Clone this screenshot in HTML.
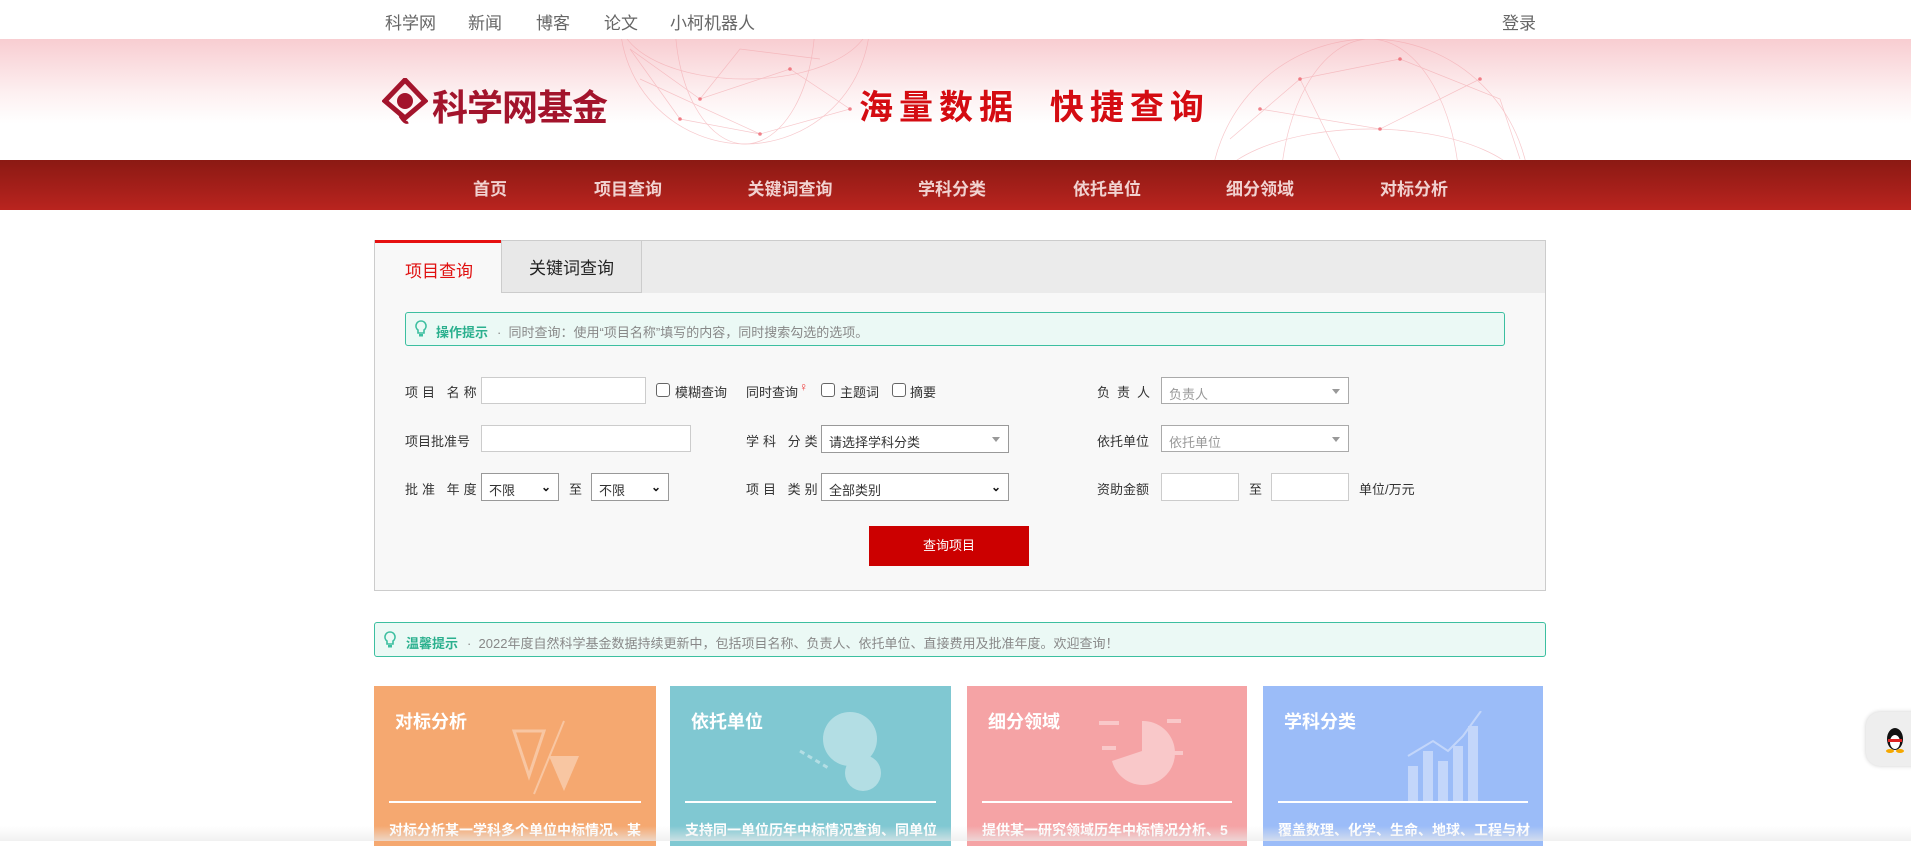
<!DOCTYPE html>
<html><head><meta charset="utf-8"><style>
*{margin:0;padding:0;box-sizing:border-box}
body{width:1911px;height:841px;overflow:hidden;background:#fff;font-family:"Liberation Sans","Noto Sans CJK SC",sans-serif;position:relative}
.a{position:absolute;white-space:nowrap}
.top a{position:absolute;top:9px;font-size:17px;color:#666;text-decoration:none}
.nav span{position:absolute;top:15px;font-size:17px;font-weight:bold;color:#f1d2d0;transform:translateX(-50%)}
.lbl{font-size:13px;color:#333}
.inp{position:absolute;background:#fff;border:1px solid #ccc}
.sel{position:absolute;background:#fff;border:1px solid #999;font-size:13px;color:#333;padding:6px 0 0 7px}
.sel.g{color:#999;border-color:#aaa}
.tri{position:absolute;right:8px;top:11px;border-left:4px solid transparent;border-right:4px solid transparent;border-top:5px solid #999}
.chev{position:absolute;right:7px;top:6px;font-size:12px;color:#111;font-weight:bold}
.cb{position:absolute;width:14px;height:14px;border:1px solid #666;border-radius:3px;background:#fff}
.card{position:absolute;top:686px;height:160px;color:#fff;overflow:hidden}
.card .t{position:absolute;left:21px;top:22px;font-size:18px;font-weight:bold}
.card .l{position:absolute;left:15px;right:15px;top:115px;height:2px;background:#fff}
.card .d{position:absolute;left:15px;right:10px;top:134px;font-size:14px;font-weight:bold;overflow:hidden;white-space:nowrap}
</style></head><body>
<div class="top">
<a style="left:385px">科学网</a><a style="left:468px">新闻</a><a style="left:536px">博客</a><a style="left:604px">论文</a><a style="left:670px">小柯机器人</a><a style="left:1502px">登录</a>
</div>
<div class="a" style="left:0;top:39px;width:1911px;height:121px;background:linear-gradient(#f8cdd1,#fdf0f1 45%,#fff 70%);overflow:hidden">
<svg width="1911" height="121" style="position:absolute;left:0;top:0">
<g fill="none" stroke="#f2a5ab" stroke-width="0.7" opacity="0.6">
<circle cx="745" cy="-20" r="125"/><ellipse cx="745" cy="-20" rx="70" ry="125"/><ellipse cx="745" cy="-20" rx="125" ry="60"/>
<path d="M630 10 L700 60 L790 30 L850 70 L760 95 L680 80 Z M640 40 L760 95 M700 60 L740 10 L820 20"/>
<circle cx="1370" cy="160" r="160"/><ellipse cx="1370" cy="160" rx="90" ry="160"/><ellipse cx="1370" cy="160" rx="160" ry="70"/>
<path d="M1230 100 L1300 40 L1400 20 L1500 60 L1520 120 M1260 70 L1380 90 L1480 40 M1300 40 L1340 121"/>
</g>
<g fill="#ee6670" opacity="0.8"><circle cx="700" cy="60" r="1.8"/><circle cx="790" cy="30" r="1.8"/><circle cx="760" cy="95" r="1.8"/><circle cx="680" cy="80" r="1.8"/><circle cx="850" cy="70" r="1.8"/><circle cx="1300" cy="40" r="1.8"/><circle cx="1400" cy="20" r="1.8"/><circle cx="1480" cy="40" r="1.8"/><circle cx="1380" cy="90" r="1.8"/><circle cx="1260" cy="70" r="1.8"/></g>
</svg>
</div>
<svg class="a" style="left:382px;top:78px" width="46" height="46" viewBox="0 0 46 46"><path d="M23 2 L43 23 L23 40 L3 23 Z" fill="none" stroke="#a3142c" stroke-width="5"/><circle cx="23" cy="23" r="8" fill="#a3142c"/><path d="M18 38 Q23 46 26 44" stroke="#a3142c" stroke-width="3" fill="none"/></svg>
<div class="a" style="left:432px;top:79px;font-size:36px;font-weight:bold;color:#a3142c;letter-spacing:-1px">科学网基金</div>
<div class="a" style="left:859px;top:80px;font-size:34px;font-weight:bold;color:#d40c12;letter-spacing:6px;text-shadow:0 0 4px #fff">海量数据&nbsp;&nbsp;快捷查询</div>
<div class="a nav" style="left:0;top:160px;width:1911px;height:50px;background:linear-gradient(#8b1913,#b9241f)">
<span style="left:490px">首页</span><span style="left:628px">项目查询</span><span style="left:790px">关键词查询</span><span style="left:952px">学科分类</span><span style="left:1107px">依托单位</span><span style="left:1260px">细分领域</span><span style="left:1414px">对标分析</span>
</div>
<div class="a" style="left:374px;top:240px;width:1172px;height:351px;background:#f8f8f8;border:1px solid #ccc">
<div class="a" style="left:0;top:0;width:1170px;height:52px;background:#ebebeb"></div>
<div class="a" style="left:0;top:-1px;width:126px;height:54px;background:#f8f8f8;border-top:3px solid #e61010"></div>
<div class="a" style="left:30px;top:16px;font-size:17px;color:#e01010">项目查询</div>
<div class="a" style="left:126px;top:0;width:141px;height:52px;background:#e8e8e8;border:1px solid #ccc;border-top:none;font-size:17px;color:#222;text-align:center;padding-top:13px">关键词查询</div>
</div>
<div class="a" style="left:405px;top:312px;width:1100px;height:34px;background:#ebf9f5;border:1.5px solid #3cbfa0;border-radius:3px"></div>
<svg class="a" style="left:415px;top:320px" width="12" height="18" viewBox="0 0 12 18"><path d="M6 1 a5 5 0 0 1 3 9 v3 h-6 v-3 a5 5 0 0 1 3 -9z" fill="none" stroke="#3cbfa0" stroke-width="1.6"/><rect x="4" y="14" width="4" height="2.5" fill="#3cbfa0"/></svg>
<div class="a" style="left:436px;top:322px;font-size:13px;color:#2bb08e;font-weight:bold">操作提示</div>
<div class="a" style="left:497px;top:322px;font-size:13px;color:#888">·&nbsp;&nbsp;同时查询：使用“项目名称”填写的内容，同时搜索勾选的选项。</div>
<div class="a lbl" style="left:405px;top:382px;letter-spacing:4px">项目 名称</div>
<div class="inp" style="left:481px;top:377px;width:165px;height:27px"></div>
<div class="cb" style="left:656px;top:383px"></div><div class="a lbl" style="left:675px;top:382px">模糊查询</div>
<div class="a lbl" style="left:746px;top:382px">同时查询</div><div class="a" style="left:799px;top:380px;font-size:12px;color:#e33">♀</div>
<div class="cb" style="left:821px;top:383px"></div><div class="a lbl" style="left:840px;top:382px">主题词</div>
<div class="cb" style="left:892px;top:383px"></div><div class="a lbl" style="left:910px;top:382px">摘要</div>
<div class="a lbl" style="left:1097px;top:382px;letter-spacing:7px">负责人</div>
<div class="sel g" style="left:1161px;top:377px;width:188px;height:27px">负责人<i class="tri"></i></div>
<div class="a lbl" style="left:405px;top:431px">项目批准号</div>
<div class="inp" style="left:481px;top:425px;width:210px;height:27px"></div>
<div class="a lbl" style="left:746px;top:431px;letter-spacing:4px">学科 分类</div>
<div class="sel" style="left:821px;top:425px;width:188px;height:28px">请选择学科分类<i class="tri"></i></div>
<div class="a lbl" style="left:1097px;top:431px">依托单位</div>
<div class="sel g" style="left:1161px;top:425px;width:188px;height:27px">依托单位<i class="tri"></i></div>
<div class="a lbl" style="left:405px;top:479px;letter-spacing:4px">批准 年度</div>
<div class="sel" style="left:481px;top:473px;width:78px;height:28px">不限<span class="chev">⌄</span></div>
<div class="a lbl" style="left:569px;top:479px">至</div>
<div class="sel" style="left:591px;top:473px;width:78px;height:28px">不限<span class="chev">⌄</span></div>
<div class="a lbl" style="left:746px;top:479px;letter-spacing:4px">项目 类别</div>
<div class="sel" style="left:821px;top:473px;width:188px;height:28px">全部类别<span class="chev">⌄</span></div>
<div class="a lbl" style="left:1097px;top:479px">资助金额</div>
<div class="inp" style="left:1161px;top:473px;width:78px;height:28px"></div>
<div class="a lbl" style="left:1249px;top:479px">至</div>
<div class="inp" style="left:1271px;top:473px;width:78px;height:28px"></div>
<div class="a lbl" style="left:1359px;top:479px">单位/万元</div>
<div class="a" style="left:869px;top:526px;width:160px;height:40px;background:#cc0000;color:#fff;font-size:13px;text-align:center;line-height:40px">查询项目</div>
<div class="a" style="left:374px;top:622px;width:1172px;height:35px;background:#ebf9f5;border:1.5px solid #3cbfa0;border-radius:3px"></div>
<svg class="a" style="left:384px;top:631px" width="12" height="18" viewBox="0 0 12 18"><path d="M6 1 a5 5 0 0 1 3 9 v3 h-6 v-3 a5 5 0 0 1 3 -9z" fill="none" stroke="#3cbfa0" stroke-width="1.6"/><rect x="4" y="14" width="4" height="2.5" fill="#3cbfa0"/></svg>
<div class="a" style="left:406px;top:633px;font-size:13px;color:#2bb08e;font-weight:bold">温馨提示</div>
<div class="a" style="left:467px;top:633px;font-size:13px;color:#888">·&nbsp;&nbsp;2022年度自然科学基金数据持续更新中，包括项目名称、负责人、依托单位、直接费用及批准年度。欢迎查询！</div>
<div class="card" style="left:374px;width:282px;background:#f5a870"><div class="t">对标分析</div>
<svg style="position:absolute;left:135px;top:30px" width="80" height="80" opacity="0.35"><path d="M5 15 L35 15 L20 60 Z" fill="none" stroke="#fff" stroke-width="3"/><path d="M40 40 L70 40 L55 75 Z" fill="#fff"/><path d="M55 5 L25 78" stroke="#fff" stroke-width="2"/></svg>
<div class="l"></div><div class="d">对标分析某一学科多个单位中标情况、某</div></div>
<div class="card" style="left:670px;width:281px;background:#80c8d2"><div class="t">依托单位</div>
<svg style="position:absolute;left:125px;top:25px" width="100" height="90" opacity="0.4"><circle cx="55" cy="28" r="27" fill="#fff"/><circle cx="68" cy="62" r="18" fill="#fff"/><path d="M5 40 L35 58" stroke="#fff" stroke-width="3" stroke-dasharray="5 4"/></svg>
<div class="l"></div><div class="d">支持同一单位历年中标情况查询、同单位</div></div>
<div class="card" style="left:967px;width:280px;background:#f5a3a5"><div class="t">细分领域</div>
<svg style="position:absolute;left:130px;top:25px" width="90" height="85" opacity="0.4"><path d="M45 40 L45 10 A32 32 0 1 1 15 50 Z" fill="#fff"/><rect x="2" y="10" width="20" height="4" fill="#fff"/><rect x="70" y="8" width="14" height="4" fill="#fff"/><rect x="5" y="35" width="14" height="4" fill="#fff"/><rect x="72" y="40" width="14" height="4" fill="#fff"/></svg>
<div class="l"></div><div class="d">提供某一研究领域历年中标情况分析、5</div></div>
<div class="card" style="left:1263px;width:280px;background:#9bbcf8"><div class="t">学科分类</div>
<svg style="position:absolute;left:140px;top:25px" width="90" height="90" opacity="0.4"><rect x="5" y="55" width="10" height="35" fill="#fff"/><rect x="20" y="40" width="10" height="50" fill="#fff"/><rect x="35" y="50" width="10" height="40" fill="#fff"/><rect x="50" y="35" width="10" height="55" fill="#fff"/><rect x="65" y="15" width="10" height="75" fill="#fff"/><path d="M5 45 L30 30 L45 40 L60 25 L78 0" stroke="#fff" stroke-width="2" fill="none"/></svg>
<div class="l"></div><div class="d">覆盖数理、化学、生命、地球、工程与材</div></div>
<div class="a" style="left:0;top:826px;width:1911px;height:15px;background:linear-gradient(rgba(255,255,255,0),rgba(235,235,235,0.7))"></div>
<div class="a" style="left:1866px;top:712px;width:60px;height:54px;background:#eee;border-radius:14px;box-shadow:0 0 4px #ccc"></div>
<svg class="a" style="left:1883px;top:725px" width="24" height="28" viewBox="0 0 24 28"><ellipse cx="12" cy="14" rx="8" ry="11" fill="#111"/><ellipse cx="12" cy="17" rx="5" ry="7" fill="#fff"/><rect x="5" y="14" width="14" height="3" fill="#d22"/><ellipse cx="7" cy="26" rx="4" ry="2" fill="#f5a800"/><ellipse cx="17" cy="26" rx="4" ry="2" fill="#f5a800"/></svg>
</body></html>
